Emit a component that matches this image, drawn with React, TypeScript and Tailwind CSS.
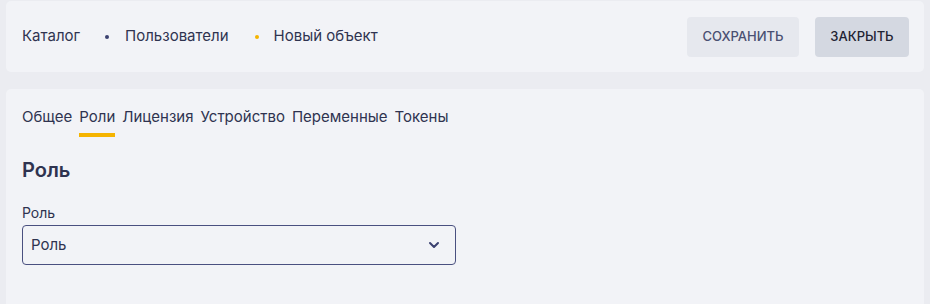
import { ChevronDown } from "lucide-react";

const tabs = ["Общее", "Роли", "Лицензия", "Устройство", "Переменные", "Токены"];

export default function App() {
  return (
    <div
      className="min-h-screen bg-[#ebecf1] px-[6px] pt-px text-[#2f3350]"
      style={{ fontFamily: "Inter, 'Open Sans', sans-serif" }}
    >
      <div className="flex h-[71px] items-center justify-between rounded-[5px] bg-[#f2f3f7] pl-4 pr-[15px]">
        <nav className="flex items-center text-[15px]">
          <span>Каталог</span>
          <span className="ml-[25px] mr-[16px] h-[4px] w-[4px] rounded-full bg-[#3b4170]" />
          <span>Пользователи</span>
          <span className="ml-[26px] mr-[15px] h-[4px] w-[4px] rounded-full bg-[#f5b400]" />
          <span>Новый объект</span>
        </nav>
        <div className="flex items-center gap-4">
          <button className="h-10 w-[112px] rounded-[4px] bg-[#e6e8ee] text-[13px] font-medium text-[#4a5072]">
            СОХРАНИТЬ
          </button>
          <button className="h-10 w-[94px] rounded-[4px] bg-[#d4d8e1] text-[13px] font-medium text-[#1f2333]">
            ЗАКРЫТЬ
          </button>
        </div>
      </div>

      <div className="mt-[17px] min-h-[240px] rounded-[5px] bg-[#f2f3f7] px-4 pt-[16px]">
        <div className="flex gap-[7px] text-[15px]">
          {tabs.map((t) => (
            <div key={t} className="flex flex-col">
              <span className="leading-[24px]">{t}</span>
              <span
                className={
                  t === "Роли"
                    ? "mt-[4px] h-[4px] bg-[#f5b400]"
                    : "mt-[4px] h-[4px]"
                }
              />
            </div>
          ))}
        </div>

        <h2 className="mt-[19px] text-[20px] font-semibold leading-[28px]">Роль</h2>

        <label className="mt-[19px] block text-[14px] leading-[20px]">Роль</label>
        <button className="mt-[2px] flex h-10 w-[434px] items-center justify-between rounded-[4px] border border-[#4a5080] px-2 text-[15px]">
          <span>Роль</span>
          <ChevronDown className="mr-[5px] h-[16px] w-[16px] text-[#3b4170]" strokeWidth={3} />
        </button>
      </div>
    </div>
  );
}
